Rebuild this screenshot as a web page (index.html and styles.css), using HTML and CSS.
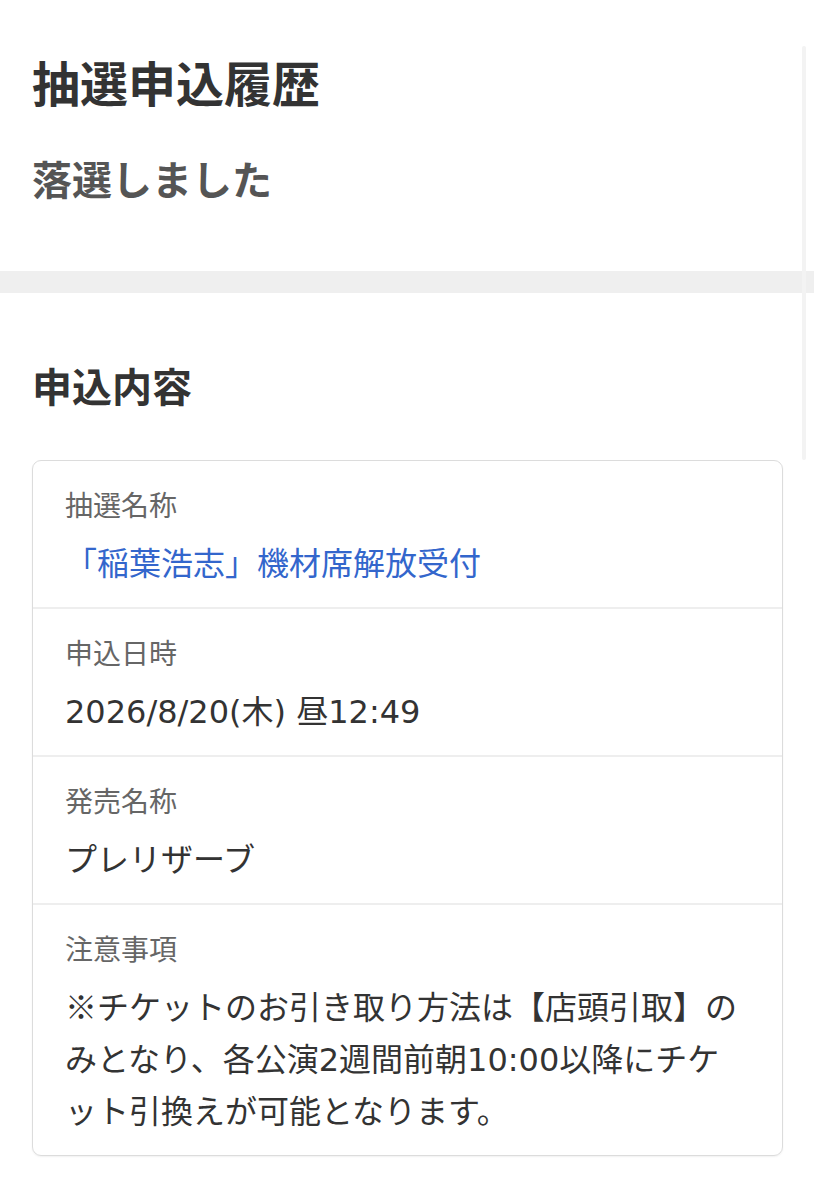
FILE: index.html
```html
<!DOCTYPE html>
<html lang="ja">
<head>
  <meta charset="UTF-8" />
  <title>抽選申込履歴</title>
  <link rel="stylesheet" href="styles.css">
</head>
<body>
  <!-- Page header -->
  <div class="page-head">
    <h1 class="page-title">抽選申込履歴</h1>
    <p class="status">落選しました</p>
  </div>

  <div class="divider"></div>

  <!-- Application details -->
  <div class="section">
    <h2 class="section-title">申込内容</h2>

    <div class="detail-card">
      <div class="detail-row">
        <div class="detail-label">抽選名称</div>
        <div class="detail-value link">「稲葉浩志」機材席解放受付</div>
      </div>
      <div class="detail-row">
        <div class="detail-label">申込日時</div>
        <div class="detail-value">2026/8/20(木) 昼12:49</div>
      </div>
      <div class="detail-row">
        <div class="detail-label">発売名称</div>
        <div class="detail-value">プレリザーブ</div>
      </div>
      <div class="detail-row">
        <div class="detail-label">注意事項</div>
        <div class="detail-value"><span class="cjk">※</span>チケットのお引き取り方法は【店頭引取】のみとなり、各公演2週間前朝10:00以降にチケット引換えが可能となります。</div>
      </div>
    </div>
  </div>

  <!-- Overlay scrollbar -->
  <div class="scroll-thumb"></div>
</body>
</html>
```

FILE: styles.css
```css
/* Basic resets & layout */
html, body {
  margin: 0;
  padding: 0;
  background-color: #fff;
  color: #333;
  font-family: "Noto Sans CJK JP", "Noto Sans", sans-serif;
}
body {
  position: relative;
  min-height: 1199px;
}

/* Header */
.page-head {
  padding: 45px 32px 64px;
}
.page-title {
  margin: 0;
  font-size: 48px;
  line-height: 72px;
  font-weight: 700;
  color: #333;
}
.status {
  margin: 33px 0 0 0;
  font-size: 40px;
  line-height: 57px;
  font-weight: 700;
  color: #555;
}

.divider {
  height: 22px;
  background-color: #efefef;
}

/* Details section */
.section {
  padding: 62px 31px 40px 32px;
}
.section-title {
  margin: 0 0 45px 0;
  font-size: 40px;
  line-height: 60px;
  font-weight: 700;
  color: #333;
}
.detail-card {
  border: 1px solid #dcdcdc;
  border-radius: 9px;
  box-shadow: 0 1px 2px rgba(0, 0, 0, 0.06);
}
.detail-row {
  padding: 23px 32px 17px;
  border-top: 2px solid #eeeeee;
}
.detail-row:first-child {
  border-top: none;
}
.detail-label {
  font-size: 28px;
  line-height: 40px;
  color: #666;
}
.detail-value {
  margin-top: 14px;
  font-family: "DejaVu Sans", "Noto Sans CJK JP", sans-serif;
  font-size: 32px;
  line-height: 52px;
  color: #333;
}
.detail-value.link {
  color: #3366cc;
}
.cjk {
  font-family: "Noto Sans CJK JP", sans-serif;
  line-height: 1;
}

/* Faint overlay scrollbar */
.scroll-thumb {
  position: absolute;
  top: 46px;
  right: 8px;
  width: 4px;
  height: 414px;
  border-radius: 2px;
  background-color: #f3f3f3;
}
```
